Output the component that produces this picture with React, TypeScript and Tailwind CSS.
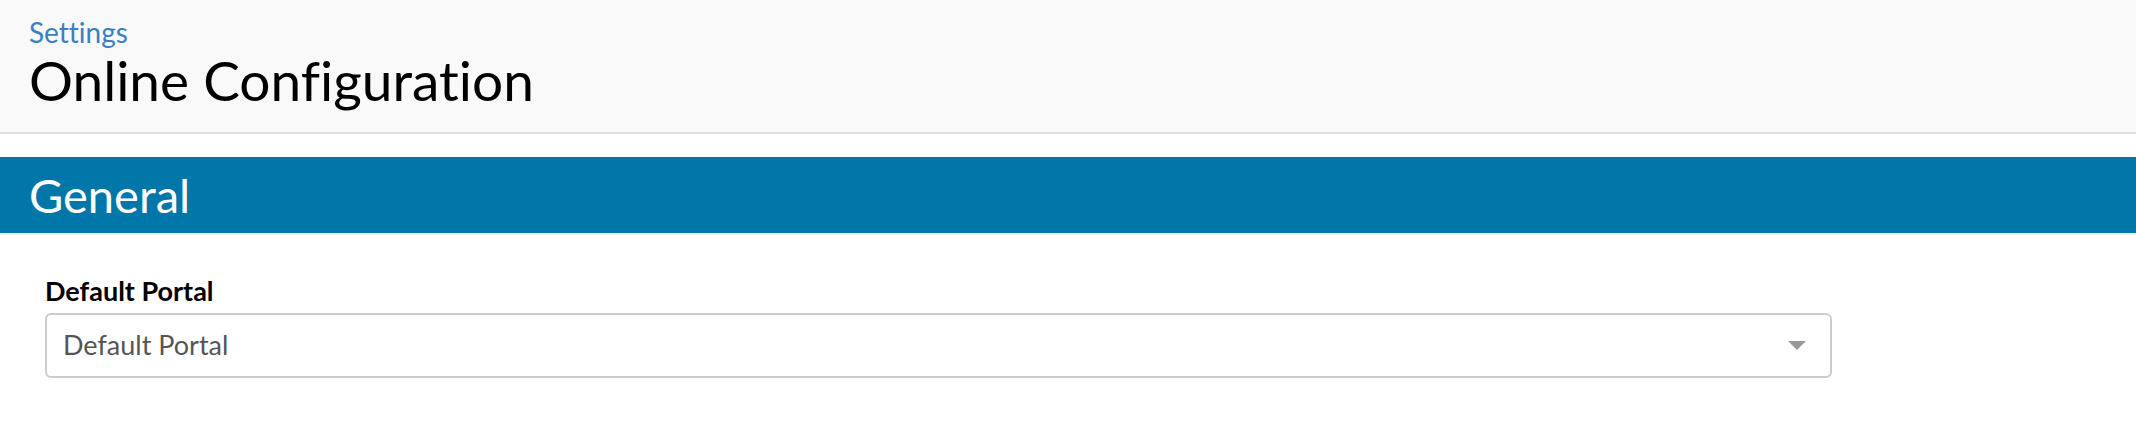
export default function App() {
  return (
    <div className="min-h-screen bg-white font-['Lato',sans-serif] [font-variant-ligatures:none]">
      {/* Page header */}
      <div className="h-[134px] bg-[#f9f9f9] border-b-2 border-[#dddddd] pl-[29px] pt-[14px]">
        <a className="block text-[28px] leading-[36px] text-[#3a7fc1]">Settings</a>
        <h1 className="text-[55px] leading-[60px] text-black">Online Configuration</h1>
      </div>

      {/* Section */}
      <div className="mt-[23px]">
        <div className="h-[76px] bg-[#0176a9] pl-[29px] flex items-center border-b-2 border-[#eeeeee] box-content">
          <h2 className="text-[47px] leading-none text-white">General</h2>
        </div>

        <div className="pl-[45px] pr-[304px] pt-[38px]">
          <label className="block text-[27px] leading-[35px] font-bold text-black">Default Portal</label>
          <div className="mt-[5px] h-[65px] border-2 border-[#cccccc] rounded-[6px] flex items-center justify-between pl-[16px] pr-[24px]">
            <span className="text-[27px] text-[#555555]">Default Portal</span>
            <svg width="18" height="10" viewBox="0 0 18 10">
              <path d="M0 0 L18 0 L9 9 Z" fill="#999999" />
            </svg>
          </div>
        </div>
      </div>
    </div>
  );
}
